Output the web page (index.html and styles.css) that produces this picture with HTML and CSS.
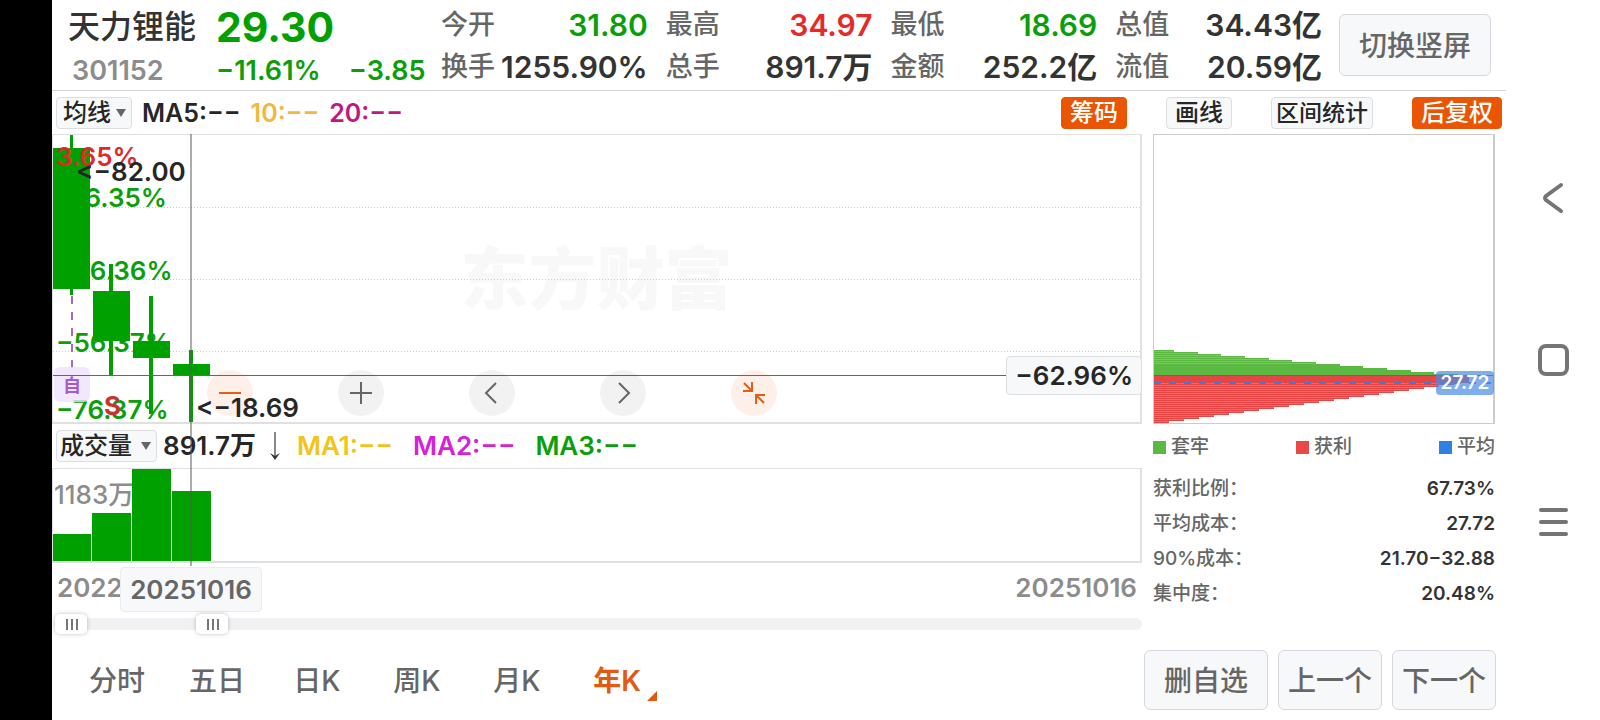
FILE: index.html
```
<!DOCTYPE html>
<html lang="zh-CN">
<head>
    <meta charset="UTF-8">
    <title>天力锂能 301152</title>
    <link rel="stylesheet" href="styles.css">
</head>
<body>
    <div class="notch"></div>

    <main class="app">
        <header class="header">
            <div class="stock">
                <h1>天力锂能</h1>
                <strong class="price">29.30</strong>
                <span class="code">301152</span>
                <div class="change"><span>−11.61%</span><span>−3.85</span></div>
            </div>
            <dl class="quotes">
                <div><dt>今开</dt><dd class="green">31.80</dd></div>
                <div><dt>最高</dt><dd class="red">34.97</dd></div>
                <div><dt>最低</dt><dd class="green">18.69</dd></div>
                <div><dt>总值</dt><dd>34.43亿</dd></div>
                <div><dt>换手</dt><dd>1255.90%</dd></div>
                <div><dt>总手</dt><dd>891.7万</dd></div>
                <div><dt>金额</dt><dd>252.2亿</dd></div>
                <div><dt>流值</dt><dd>20.59亿</dd></div>
            </dl>
            <button class="btn btn-rotate">切换竖屏</button>
        </header>

        <div class="toolbar">
            <div class="dropdown">
                <select class="select-ma" aria-label="主图指标"><option>均线</option></select>
            </div>
            <div class="ma-list">
                <span class="dark">MA5:−−</span>
                <span class="ma10">10:−−</span>
                <span class="ma20">20:−−</span>
            </div>
            <div class="tools">
                <button class="tool active">筹码</button>
                <button class="tool">画线</button>
                <button class="tool tool-range">区间统计</button>
                <button class="tool active">后复权</button>
            </div>
        </div>

        <div class="content">
            <section class="charts">
                <div class="kline">
                    <div class="watermark">东方财富</div>
                    <svg class="plot" role="img" aria-label="年K线">
                        <g class="grid">
                            <line x1="0" y1="72" x2="100%" y2="72"/>
                            <line x1="0" y1="144" x2="100%" y2="144"/>
                            <line x1="0" y1="216" x2="100%" y2="216"/>
                        </g>
                        <g class="scale">
                            <text x="3" y="72">−16.35%</text>
                            <text x="3" y="145">−36.36%</text>
                            <text x="3" y="217">−56.37%</text>
                            <text x="3" y="284">−76.37%</text>
                        </g>
                        <line class="event-line" x1="19" y1="161" x2="19" y2="240"/>
                        <g class="candles">
                            <rect x="17" y="0" width="3" height="160"/>
                            <rect x="0" y="13" width="37" height="141"/>
                            <rect x="56" y="129" width="4" height="111"/>
                            <rect x="40" y="156" width="37" height="50"/>
                            <rect x="96" y="161" width="4" height="118"/>
                            <rect x="80" y="206" width="37" height="17"/>
                            <rect x="136" y="215" width="4" height="74"/>
                            <rect x="120" y="229" width="37" height="11"/>
                        </g>
                        <text class="top-scale" x="3" y="31">3.65%</text>
                        <rect class="event-box" x="1" y="232" width="36" height="35" rx="6"/>
                        <text class="event" x="10" y="257">自</text>
                        <text class="sell" x="51" y="280">S</text>
                        <line class="cross-h" x1="0" y1="240" x2="100%" y2="240"/>
                    </svg>
                    <div class="controls">
                        <button class="round hot" aria-label="缩小"><svg viewBox="0 0 46 46"><path d="M12 23h22"/></svg></button>
                        <button class="round" aria-label="放大"><svg viewBox="0 0 46 46"><path d="M12 23h22M23 12v22"/></svg></button>
                        <button class="round" aria-label="左移"><svg viewBox="0 0 46 46"><path d="M27 13L17 23l10 10"/></svg></button>
                        <button class="round" aria-label="右移"><svg viewBox="0 0 46 46"><path d="M19 13l10 10-10 10"/></svg></button>
                        <button class="round hot" aria-label="收起"><svg viewBox="0 0 46 46"><path d="M13 13l8 8M21 12v9h-9M33 33l-8-8M25 34v-9h9"/></svg></button>
                    </div>
                    <svg class="plot marks">
                        <text x="23" y="46">&lt;−82.00</text>
                        <text x="143" y="282">&lt;−18.69</text>
                    </svg>
                    <span class="tag tag-percent">−62.96%</span>
                </div>

                <div class="volume-bar">
                    <div class="dropdown">
                        <select class="select-volume" aria-label="副图指标"><option>成交量</option></select>
                    </div>
                    <span class="dark volume-now">891.7万</span>
                    <svg class="down" viewBox="0 0 12 30"><path class="stem" d="M6 1v26"/><path d="M1 22l5 3 5-3-5 7z"/></svg>
                    <div class="volume-ma">
                        <span class="ma1">MA1:−−</span>
                        <span class="ma2">MA2:−−</span>
                        <span class="ma3">MA3:−−</span>
                    </div>
                </div>

                <div class="volume">
                    <svg class="plot" role="img" aria-label="成交量">
                        <text x="1" y="35">1183万</text>
                        <rect x="0" y="65" width="38" height="28"/>
                        <rect x="39" y="44" width="39" height="49"/>
                        <rect x="79" y="0" width="39" height="93"/>
                        <rect x="119" y="22" width="39" height="71"/>
                    </svg>
                </div>

                <div class="dates">
                    <span>2022</span>
                    <span>20251016</span>
                    <span class="tag tag-date">20251016</span>
                </div>

                <div class="range">
                    <input type="range" min="0" max="1000" value="1" aria-label="开始日期">
                    <input type="range" min="0" max="1000" value="134" aria-label="结束日期">
                </div>
                <div class="cross-v"></div>
            </section>

            <aside class="chips">
                <div class="chip-chart">
                    <svg class="plot" role="img" aria-label="筹码分布">
                        <defs>
                            <pattern id="rows" width="4" height="2" patternUnits="userSpaceOnUse">
                                <rect width="4" height="1" fill="#fff" fill-opacity=".2"/>
                            </pattern>
                        </defs>
                        <path fill="#5bb843" d="M0 215h20v2h24v2h23v2h24v2h24v2h23v2h24v2h24v2h23v2h24v2h24v2h23v2h24v1H0z"/>
                        <path fill="url(#rows)" d="M0 215h20v2h24v2h23v2h24v2h24v2h23v2h24v2H0z"/>
                        <path fill="#e64545" d="M0 288h15v-2h15v-2h15v-2h15v-2h15v-2h15v-2h15v-2h15v-2h15v-2h15v-2h15v-2h15v-2h15v-2h15v-2h15v-2h15v-2h15v-2h15v-2h15v-2h15v-2h15v-8H0z"/>
                        <path fill="url(#rows)" d="M0 288h15v-2h15v-2h15v-2h15v-2h15v-2h15v-2h15v-2h15v-2h15v-2h15v-2h15v-2h15v-2h15v-2h15v-2h15v-2h15v-2h15v-2h15v-2h15v-2h15v-2H0z"/>
                        <line class="average" x1="0" y1="248" x2="100%" y2="248"/>
                        <line class="cross-h" x1="0" y1="240" x2="100%" y2="240"/>
                    </svg>
                    <span class="average-tag">27.72</span>
                </div>
                <ul class="legend">
                    <li class="locked">套牢</li>
                    <li class="profit">获利</li>
                    <li class="mean">平均</li>
                </ul>
                <dl class="stats">
                    <div><dt>获利比例：</dt><dd>67.73%</dd></div>
                    <div><dt>平均成本：</dt><dd>27.72</dd></div>
                    <div><dt>90%成本：</dt><dd>21.70−32.88</dd></div>
                    <div><dt>集中度：</dt><dd>20.48%</dd></div>
                </dl>
            </aside>
        </div>

        <footer class="footer">
            <nav class="periods">
                <a href="#">分时</a>
                <a href="#">五日</a>
                <a href="#">日K</a>
                <a href="#">周K</a>
                <a href="#">月K</a>
                <a href="#" class="current">年K</a>
            </nav>
            <div class="actions">
                <button class="btn btn-wide">删自选</button>
                <button class="btn">上一个</button>
                <button class="btn">下一个</button>
            </div>
        </footer>
    </main>

    <nav class="system">
        <button aria-label="返回"><svg viewBox="0 0 32 32"><path d="M24 3L9 14q-2 2 0 4l15 11"/></svg></button>
        <button aria-label="主页"><svg viewBox="0 0 32 32"><rect x="3" y="2" width="27" height="28" rx="6"/></svg></button>
        <button aria-label="菜单"><svg viewBox="0 0 32 32"><path d="M4 4h25M4 16h25M4 28h25"/></svg></button>
    </nav>
</body>
</html>
```
FILE: styles.css
```
* {
    box-sizing: border-box;
}

body {
    margin: 0;
    min-height: 100vh;
    display: flex;
    background: #fff;
    color: #333;
    font-family: Inter, "Noto Sans CJK SC", sans-serif;
    font-weight: 600;
    font-size: 26px;
    line-height: 32px;
}

h1, dl, dd, ul {
    margin: 0;
    padding: 0;
}

button, select {
    font: inherit;
    color: inherit;
    padding: 0;
    cursor: pointer;
}

.notch {
    flex: 0 0 52px;
    background: #000;
}

.app {
    flex: 1;
    min-width: 0;
    display: flex;
    flex-direction: column;
}

.green { color: #0a9f0a; }
.red { color: #e62a2a; }
.dark { color: #262626; }

/* header */
.header {
    display: flex;
    align-items: center;
    height: 91px;
    padding-right: 15px;
    border-bottom: 1px solid #d4d4d8;
}

.stock {
    display: grid;
    grid-template-columns: 148px 1fr;
    align-items: center;
    row-gap: 8px;
    width: 389px;
    padding: 4px 0 0 16px;
}

h1 {
    font-size: 32px;
    font-weight: 500;
    line-height: 40px;
}

.price {
    font-size: 41px;
    font-weight: 700;
    line-height: 36px;
    color: #00a000;
}

.code {
    padding-left: 4px;
    color: #8c8c8c;
    font-size: 27px;
}

.change {
    display: flex;
    gap: 28px;
    color: #0a9f0a;
    font-size: 27px;
}

.quotes {
    flex: 1;
    display: grid;
    grid-template-columns: repeat(4, 1fr);
    gap: 2px 18px;
    padding-top: 2px;
}

.quotes div {
    display: flex;
    justify-content: space-between;
    align-items: center;
    line-height: 40px;
    white-space: nowrap;
}

.quotes dt {
    color: #666;
    font-size: 27px;
    font-weight: 500;
}

.quotes dd {
    font-size: 30px;
}

.btn {
    height: 60px;
    width: 104px;
    padding-top: 2px;
    background: #f7f8fa;
    border: 1px solid #d5d7dc;
    border-radius: 6px;
    color: #666;
    font-size: 28px;
    font-weight: 500;
}

.btn-wide {
    width: 124px;
}

.btn-rotate {
    width: 152px;
    height: 62px;
    margin-left: 17px;
}

/* toolbar */
.toolbar {
    display: flex;
    align-items: center;
    height: 43px;
    padding: 1px 4px 0;
}

.dropdown {
    position: relative;
}

.dropdown::after {
    content: "";
    position: absolute;
    right: 6px;
    top: 12px;
    border: 5px solid transparent;
    border-top: 8px solid #666;
    border-bottom: 0;
    pointer-events: none;
}

.dropdown select {
    display: block;
    appearance: none;
    height: 32px;
    padding-left: 3px;
    background: #f7f8fa;
    border: 1px solid #dcdee2;
    border-radius: 4px;
    color: #262626;
    font-size: 24px;
    font-weight: 500;
    line-height: 28px;
}

.dropdown .select-ma {
    width: 76px;
    padding-left: 6px;
}

.dropdown .select-volume {
    width: 101px;
}

.ma-list {
    display: flex;
    gap: 10px;
    padding-left: 10px;
    font-size: 25px;
}

.ma10 { color: #f0b840; }
.ma20 { color: #c01880; }

.tools {
    display: flex;
    gap: 39px;
    margin-left: auto;
}

.tool {
    height: 32px;
    padding: 0 8px;
    background: #f7f8fa;
    border: 1px solid #dcdee2;
    border-radius: 4px;
    color: #262626;
    font-size: 24px;
    font-weight: 500;
    line-height: 28px;
}

.tool-range {
    padding: 0 4px;
    font-size: 23px;
}

.tool.active {
    background: #ea5504;
    border-color: #ea5504;
    color: #fff;
}

/* charts */
.content {
    display: flex;
    gap: 11px;
    padding-right: 11px;
}

.charts {
    flex: 1;
    min-width: 0;
    position: relative;
}

.kline, .volume {
    position: relative;
    border: 1px solid #e0e0e0;
    border-width: 1px 2px 2px 1px;
}

.kline {
    height: 290px;
}

.plot {
    position: absolute;
    inset: 0;
    width: 100%;
    height: 100%;
}

.plot text {
    font-size: 26px;
}

.marks {
    fill: #262626;
    pointer-events: none;
}

.grid line {
    stroke: #ccc;
    stroke-dasharray: 1 2;
    shape-rendering: crispEdges;
}

.scale {
    fill: #0a9f0a;
}

.candles, .volume rect {
    fill: #00a000;
}

.top-scale {
    fill: #e02828;
}

.event-line {
    stroke: #a868c8;
    stroke-width: 2;
    stroke-dasharray: 8 8;
}

.event-box {
    fill: #efe2fc;
    fill-opacity: .8;
}

.plot .event {
    fill: #a45ad6;
    font-size: 18px;
}

.plot .sell {
    fill: #c83232;
    font-weight: 700;
}

.cross-h {
    stroke: #666;
    shape-rendering: crispEdges;
}

.cross-v {
    position: absolute;
    top: 0;
    left: 138px;
    width: 2px;
    height: 432px;
    background: rgba(90, 90, 90, .5);
}

.watermark {
    position: absolute;
    inset: 0;
    display: flex;
    align-items: center;
    justify-content: center;
    font-size: 68px;
    font-weight: 900;
    color: #f8f8f8;
}

.controls {
    position: absolute;
    left: 154px;
    bottom: 6px;
    display: flex;
    gap: 85px;
}

.round {
    width: 46px;
    height: 46px;
    border: 0;
    border-radius: 50%;
    background: rgba(0, 0, 0, .05);
}

.round svg {
    display: block;
    fill: none;
    stroke: #666;
    stroke-width: 2;
}

.round.hot {
    background: rgba(240, 90, 0, .09);
}

.round.hot svg {
    stroke: #e06018;
}

.tag {
    position: absolute;
    background: #f7f8fa;
    border: 1px solid #dcdee2;
    border-radius: 4px;
    text-align: center;
}

.tag-percent {
    right: -2px;
    top: 221px;
    padding: 0 8px;
    color: #262626;
    line-height: 37px;
}

.volume-bar {
    display: flex;
    align-items: center;
    height: 44px;
    padding-left: 4px;
}

.volume-now {
    min-width: 102px;
    padding-left: 6px;
}

.down {
    width: 12px;
    height: 30px;
    margin: 0 16px 0 10px;
    fill: #333;
}

.down .stem {
    stroke: #888;
    stroke-width: 2;
}

.volume-ma {
    display: flex;
    gap: 20px;
}

.ma1 { color: #f2c318; }
.ma2 { color: #d622d6; }
.ma3 { color: #0a9f0a; }

.volume {
    height: 95px;
}

.volume text {
    fill: #8c8c8c;
    font-weight: 500;
}

.dates {
    position: relative;
    display: flex;
    justify-content: space-between;
    height: 55px;
    padding: 9px 5px;
    color: #8c8c8c;
}

.tag-date {
    left: 68px;
    top: 4px;
    width: 142px;
    line-height: 43px;
    border-color: #ebecef;
    color: #666;
}

.range {
    position: relative;
    height: 12px;
    margin-left: 2px;
    border-radius: 6px;
    background: #f1f1f4;
}

.range input {
    position: absolute;
    top: -6px;
    left: 0;
    width: 100%;
    height: 24px;
    margin: 0;
    appearance: none;
    background: none;
    pointer-events: none;
}

.range input::-webkit-slider-thumb {
    appearance: none;
    width: 32px;
    height: 20px;
    border-radius: 5px;
    background:
        linear-gradient(#777, #777) 11px 5px / 2px 11px no-repeat,
        linear-gradient(#777, #777) 16px 5px / 2px 11px no-repeat,
        linear-gradient(#777, #777) 21px 5px / 2px 11px no-repeat,
        #fff;
    box-shadow: 0 0 4px rgba(0, 0, 0, .25);
    pointer-events: auto;
}

/* chip distribution */
.chips {
    flex: 0 0 342px;
    font-size: 19px;
}

.chip-chart {
    position: relative;
    height: 290px;
    border: 1px solid #ccc;
    border-right-width: 2px;
}

.average {
    stroke: #4878d0;
    stroke-width: 2;
    stroke-dasharray: 7 8;
}

.average-tag {
    position: absolute;
    right: -1px;
    top: 236px;
    width: 58px;
    background: rgba(72, 140, 228, .7);
    border-radius: 4px;
    color: #fff;
    line-height: 24px;
    text-align: center;
}

.legend {
    display: flex;
    justify-content: space-between;
    margin: 7px 0 8px;
    list-style: none;
    color: #666;
    font-weight: 500;
}

.legend li {
    display: flex;
    align-items: center;
    gap: 5px;
}

.legend li::before {
    content: "";
    width: 13px;
    height: 13px;
    background: #5bb843;
}

.legend .profit::before { background: #e84848; }
.legend .mean::before { background: #3080e0; }

.stats div {
    display: flex;
    justify-content: space-between;
    line-height: 35px;
}

.stats dt {
    color: #666;
    font-weight: 500;
}

/* footer */
.footer {
    display: flex;
    justify-content: space-between;
    align-items: center;
    margin-top: auto;
    padding: 0 10px 10px 15px;
}

.periods {
    display: flex;
    font-size: 28px;
}

.periods a {
    width: 100px;
    padding-top: 2px;
    color: #666;
    font-weight: 500;
    text-align: center;
    text-decoration: none;
}

.periods .current {
    position: relative;
    color: #e05a10;
    font-weight: 600;
}

.current::after {
    content: "";
    position: absolute;
    right: 10px;
    bottom: -4px;
    border: 5px solid #e05a10;
    border-top-color: transparent;
    border-left-color: transparent;
}

.actions {
    display: flex;
    gap: 10px;
}

/* system keys */
.system {
    flex: 0 0 94px;
    display: flex;
    flex-direction: column;
    align-items: center;
    justify-content: center;
    gap: 130px;
}

.system button {
    width: 32px;
    height: 32px;
    padding: 0;
    border: 0;
    background: none;
}

.system svg {
    display: block;
    fill: none;
    stroke: #757575;
    stroke-width: 4;
    stroke-linecap: round;
}
```
